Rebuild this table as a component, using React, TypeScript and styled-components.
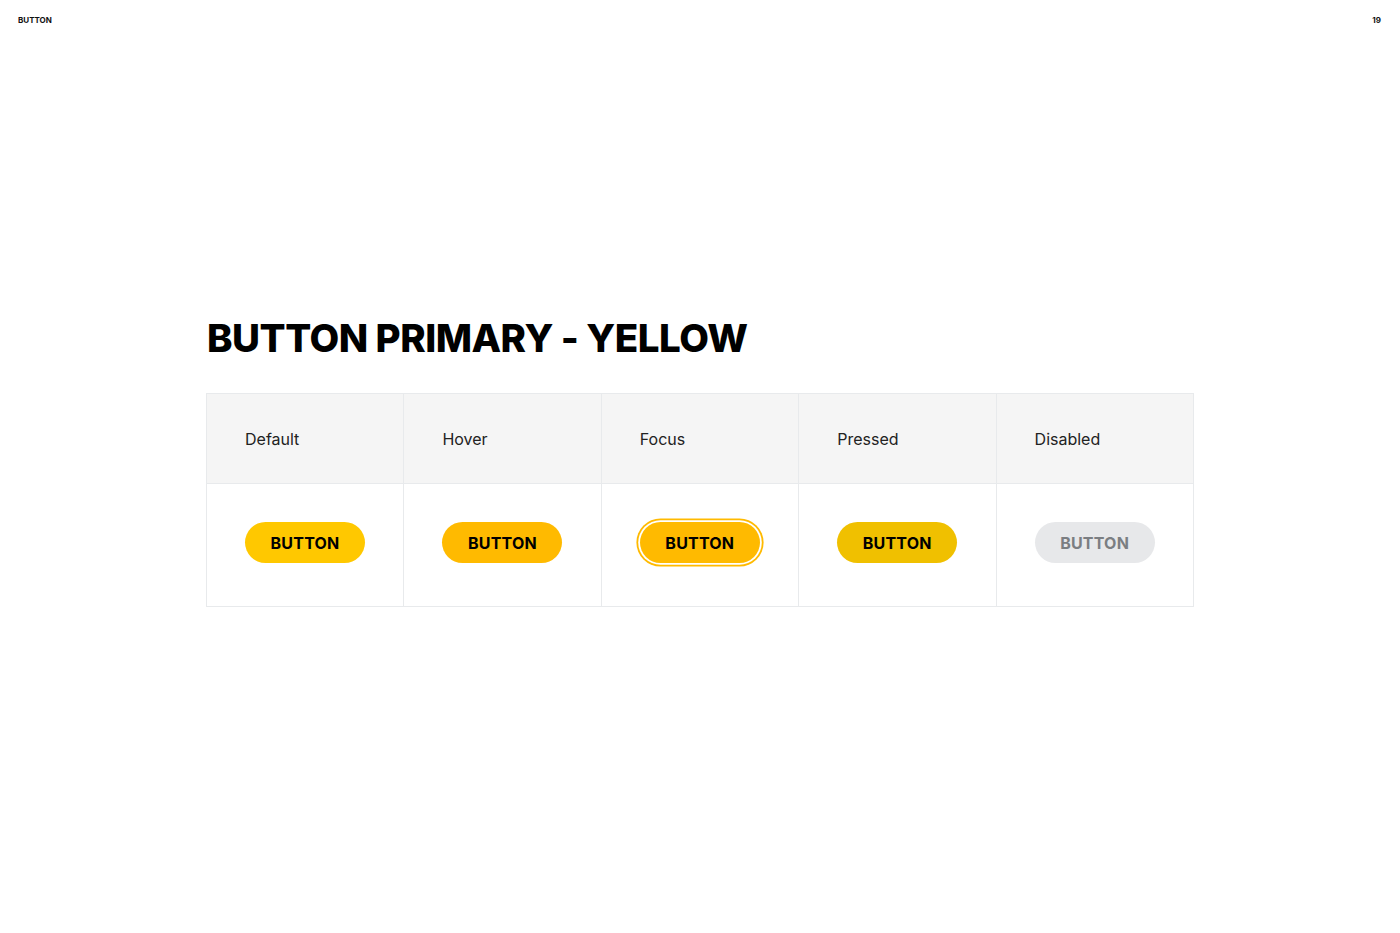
import { ReactElement } from 'react'
import styled, { createGlobalStyle, css } from 'styled-components'

const GlobalStyle = createGlobalStyle`
  html, body {
    margin: 0;
    padding: 0;
    background: #ffffff;
    font-family: Inter, 'Noto Sans', sans-serif;
    color: #111111;
  }
`

const Page = styled.div`
  width: 1400px;
  height: 933px;
  display: flex;
  flex-direction: column;
  box-sizing: border-box;
`

const TopBar = styled.div`
  display: flex;
  justify-content: space-between;
  align-items: center;
  height: 40px;
  padding: 0 19px 0 18px;
  font-size: 8px;
  font-weight: 700;
  color: #111111;
`

const Content = styled.main`
  width: 988px;
  margin: 272px auto 0;
`

const Title = styled.h1`
  margin: 0 0 29px 1px;
  font-size: 38.5px;
  line-height: 52px;
  font-weight: 800;
  letter-spacing: -0.5px;
  color: #000000;
`

const Table = styled.div`
  display: grid;
  grid-template-columns: repeat(5, 1fr);
  border-top: 1px solid #e8eaec;
  border-left: 1px solid #e8eaec;
`

const HeadCell = styled.div`
  height: 89px;
  display: flex;
  align-items: center;
  padding-left: 38px;
  background: #f5f5f5;
  border-right: 1px solid #e8eaec;
  border-bottom: 1px solid #e8eaec;
  font-size: 16px;
  color: #222222;
`

const BodyCell = styled.div`
  height: 123px;
  box-sizing: border-box;
  display: flex;
  align-items: center;
  padding: 0 0 5px 38px;
  border-right: 1px solid #e8eaec;
  border-bottom: 1px solid #e8eaec;
`

type Variant = 'default' | 'hover' | 'focus' | 'pressed' | 'disabled'

const fills: Record<Variant, string> = {
  default: '#ffc800',
  hover: '#ffba00',
  focus: '#ffba00',
  pressed: '#f0c000',
  disabled: '#e7e8ea',
}

const Button = styled.button<{ $variant: Variant }>`
  width: 120px;
  height: 41px;
  border: none;
  border-radius: 21px;
  background: ${(props) => fills[props.$variant]};
  font-family: Inter, 'Noto Sans', sans-serif;
  font-size: 16px;
  font-weight: 700;
  letter-spacing: 0.2px;
  color: ${(props) => (props.$variant === 'disabled' ? '#7b7e82' : '#000000')};
  padding: 0;
  cursor: pointer;
  ${(props) =>
    props.$variant === 'focus' &&
    css`
      box-shadow: 0 0 0 1.8px #ffffff, 0 0 0 3.6px #ffba00;
    `}
`

const states: { label: string; variant: Variant }[] = [
  { label: 'Default', variant: 'default' },
  { label: 'Hover', variant: 'hover' },
  { label: 'Focus', variant: 'focus' },
  { label: 'Pressed', variant: 'pressed' },
  { label: 'Disabled', variant: 'disabled' },
]

export default function App(): ReactElement {
  return (
    <>
      <GlobalStyle />
      <Page>
        <TopBar>
          <span>BUTTON</span>
          <span>19</span>
        </TopBar>
        <Content>
          <Title>BUTTON PRIMARY - YELLOW</Title>
          <Table>
            {states.map((s) => (
              <HeadCell key={s.label}>{s.label}</HeadCell>
            ))}
            {states.map((s) => (
              <BodyCell key={s.label}>
                <Button $variant={s.variant} disabled={s.variant === 'disabled'}>
                  BUTTON
                </Button>
              </BodyCell>
            ))}
          </Table>
        </Content>
      </Page>
    </>
  )
}
